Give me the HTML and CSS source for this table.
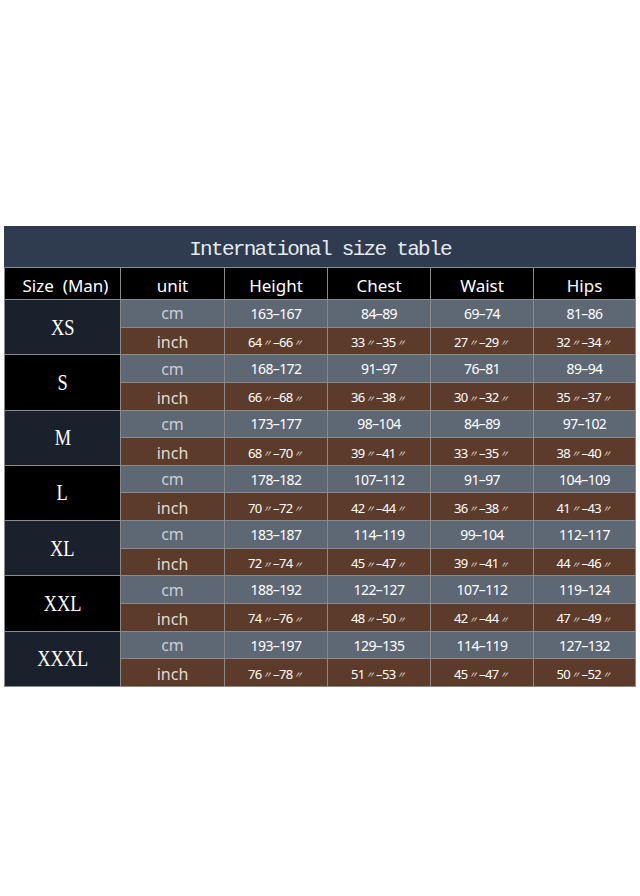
FILE: index.html
```html
<!DOCTYPE html>
<html>
<head>
<meta charset="utf-8">
<link rel="stylesheet" href="styles.css">
</head>
<body>
<div class="sheet">
  <div class="title">International size table</div>
  <div class="hd first">Size<span class="paren">(Man)</span></div>
  <div class="hd">unit</div>
  <div class="hd">Height</div>
  <div class="hd">Chest</div>
  <div class="hd">Waist</div>
  <div class="hd">Hips</div>

  <div class="size navy"><span>XS</span></div>
  <div class="unit cm">cm</div><div class="v cm">163–167</div><div class="v cm">84–89</div><div class="v cm">69–74</div><div class="v cm">81–86</div>
  <div class="unit in">inch</div><div class="v in">64<i>〃</i>–66<i>〃</i></div><div class="v in">33<i>〃</i>–35<i>〃</i></div><div class="v in">27<i>〃</i>–29<i>〃</i></div><div class="v in">32<i>〃</i>–34<i>〃</i></div>

  <div class="size black"><span>S</span></div>
  <div class="unit cm">cm</div><div class="v cm">168–172</div><div class="v cm">91–97</div><div class="v cm">76–81</div><div class="v cm">89–94</div>
  <div class="unit in">inch</div><div class="v in">66<i>〃</i>–68<i>〃</i></div><div class="v in">36<i>〃</i>–38<i>〃</i></div><div class="v in">30<i>〃</i>–32<i>〃</i></div><div class="v in">35<i>〃</i>–37<i>〃</i></div>

  <div class="size navy"><span>M</span></div>
  <div class="unit cm">cm</div><div class="v cm">173–177</div><div class="v cm">98–104</div><div class="v cm">84–89</div><div class="v cm">97–102</div>
  <div class="unit in">inch</div><div class="v in">68<i>〃</i>–70<i>〃</i></div><div class="v in">39<i>〃</i>–41<i>〃</i></div><div class="v in">33<i>〃</i>–35<i>〃</i></div><div class="v in">38<i>〃</i>–40<i>〃</i></div>

  <div class="size black"><span>L</span></div>
  <div class="unit cm">cm</div><div class="v cm">178–182</div><div class="v cm">107–112</div><div class="v cm">91–97</div><div class="v cm">104–109</div>
  <div class="unit in">inch</div><div class="v in">70<i>〃</i>–72<i>〃</i></div><div class="v in">42<i>〃</i>–44<i>〃</i></div><div class="v in">36<i>〃</i>–38<i>〃</i></div><div class="v in">41<i>〃</i>–43<i>〃</i></div>

  <div class="size navy"><span>XL</span></div>
  <div class="unit cm">cm</div><div class="v cm">183–187</div><div class="v cm">114–119</div><div class="v cm">99–104</div><div class="v cm">112–117</div>
  <div class="unit in">inch</div><div class="v in">72<i>〃</i>–74<i>〃</i></div><div class="v in">45<i>〃</i>–47<i>〃</i></div><div class="v in">39<i>〃</i>–41<i>〃</i></div><div class="v in">44<i>〃</i>–46<i>〃</i></div>

  <div class="size black"><span>XXL</span></div>
  <div class="unit cm">cm</div><div class="v cm">188–192</div><div class="v cm">122–127</div><div class="v cm">107–112</div><div class="v cm">119–124</div>
  <div class="unit in">inch</div><div class="v in">74<i>〃</i>–76<i>〃</i></div><div class="v in">48<i>〃</i>–50<i>〃</i></div><div class="v in">42<i>〃</i>–44<i>〃</i></div><div class="v in">47<i>〃</i>–49<i>〃</i></div>

  <div class="size navy"><span>XXXL</span></div>
  <div class="unit cm">cm</div><div class="v cm">193–197</div><div class="v cm">129–135</div><div class="v cm">114–119</div><div class="v cm">127–132</div>
  <div class="unit in">inch</div><div class="v in">76<i>〃</i>–78<i>〃</i></div><div class="v in">51<i>〃</i>–53<i>〃</i></div><div class="v in">45<i>〃</i>–47<i>〃</i></div><div class="v in">50<i>〃</i>–52<i>〃</i></div>
</div>
</body>
</html>
```
FILE: styles.css
```css
html, body {
  margin: 0;
  padding: 0;
  background: #ffffff;
}

body {
  width: 640px;
  height: 896px;
  overflow: hidden;
}

.sheet {
  margin: 226px 0 0 4px;
  width: 632px;
  box-sizing: border-box;
  display: grid;
  grid-template-columns: 115px 103px 102px 102px 102px 101px;
  grid-template-rows: 41px 31px repeat(14, 26.65px);
  gap: 1px;
  padding: 0 1px 1px 1px;
  background: #8a8a8a;
  font-family: "Noto Sans", "Open Sans", sans-serif;
}

.sheet > div {
  display: flex;
  align-items: center;
  justify-content: center;
  color: #ffffff;
  box-sizing: border-box;
}

.title {
  grid-column: 1 / -1;
  margin: 0 -1px;
  background: #2f3b4e;
  font-family: "Liberation Mono", "Courier New", monospace;
  font-size: 21px;
  letter-spacing: -1.7px;
  color: #e6e9ee !important;
  padding-top: 6px;
}

.hd {
  background: #000000;
  font-size: 17px;
  color: #f2f2f2;
  padding-top: 3px;
}

.hd.first {
  padding-left: 6px;
}

.paren {
  margin-left: 9px;
}

.size {
  grid-row: span 2;
  font-family: "Liberation Serif", "Times New Roman", serif;
  font-size: 20px;
  color: #f0f0f0;
}

.size span {
  display: inline-block;
  transform: scale(0.92, 1.2);
}

.navy {
  background: #1b212c;
}

.black {
  background: #000000;
}

.cm {
  background: #5e6774;
}

.in {
  background: #5c3b2b;
}

.unit {
  font-size: 16px;
}

.unit.cm {
  color: #c9ced6 !important;
}

.unit.in {
  color: #e2d8d2 !important;
  padding-top: 3px;
}

.v {
  font-size: 14px;
  letter-spacing: -0.6px;
}

.v.in {
  font-size: 13px;
  padding-top: 2px;
}

.v i {
  font-family: "Noto Sans CJK SC", sans-serif;
  font-size: 9px;
  font-style: italic;
  margin: 0 2px 0 1px;
  position: relative;
  top: 1px;
}
```
